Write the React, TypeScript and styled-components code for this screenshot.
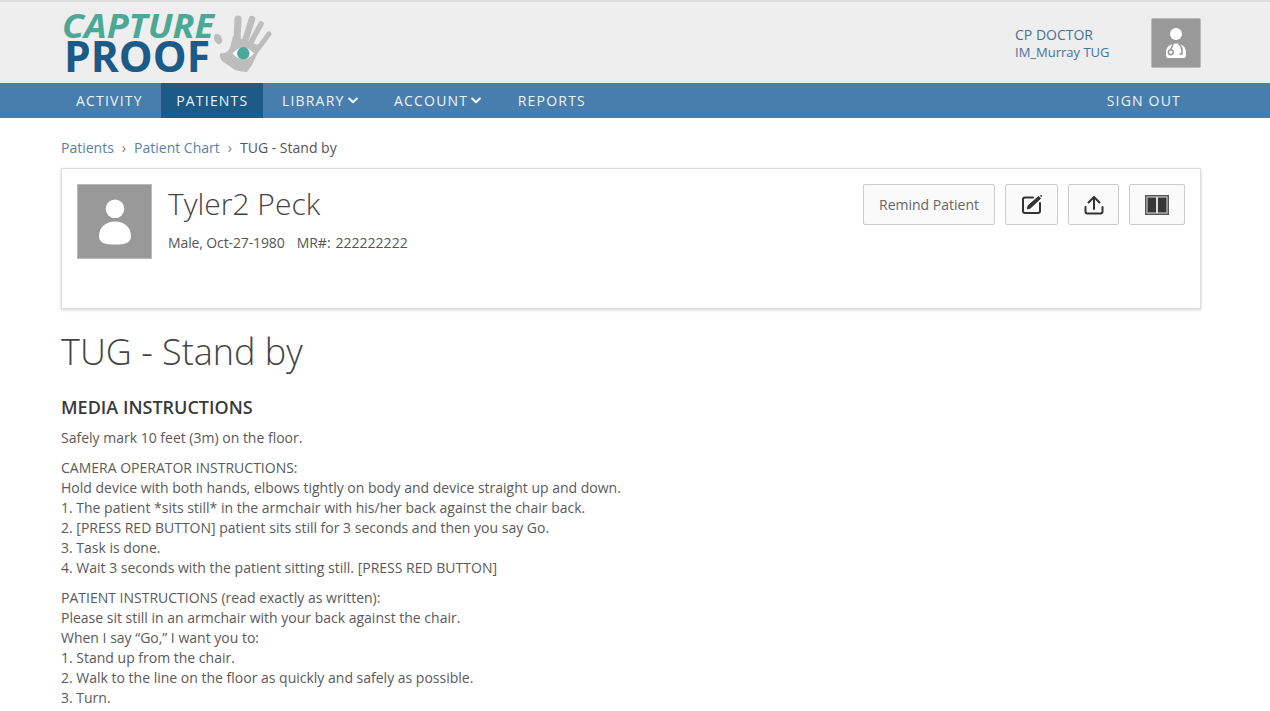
import React from "react";
import styled, { createGlobalStyle } from "styled-components";

const Global = createGlobalStyle`
  html, body { margin: 0; padding: 0; background: #fff; overflow: hidden; height: 711px; }
  body { font-family: "Open Sans", "Liberation Sans", sans-serif; color: #444; font-size: 14px; }
`;

const Header = styled.header`
  box-sizing: border-box;
  height: 83px;
  background: #eee;
  border-top: 2px solid #ddd;
  padding: 11px 69px 0 61px;
  display: flex;
  justify-content: space-between;
  align-items: flex-start;
`;
const Logo = styled.svg`
  display: block;
  width: 212px;
  height: 62px;
  overflow: visible;
`;
const UserBox = styled.div`
  display: flex;
  align-items: flex-start;
  padding-top: 5px;
`;
const UserText = styled.div`
  width: 136px;
  color: #45729b;
  padding-top: 8px;
`;
const UserName = styled.div`
  font-size: 14px;
  line-height: 18px;
`;
const UserSub = styled.div`
  font-size: 13px;
  line-height: 17px;
`;
const UserAvatar = styled.div`
  box-sizing: border-box;
  width: 50px;
  height: 50px;
  background: #999;
  border: 1px solid #bbb;
  border-radius: 2px;
  display: flex;
  align-items: center;
  justify-content: center;
`;
const Nav = styled.nav`
  height: 35px;
  background: #487eae;
  padding: 0 74px 0 61px;
  display: flex;
  gap: 3.5px;
`;
const NavItem = styled.a<{ $active?: boolean; $right?: boolean }>`
  display: flex;
  align-items: center;
  height: 35px;
  padding: 0 15px;
  margin-left: ${(p) => (p.$right ? "auto" : "0")};
  background: ${(p) => (p.$active ? "#1c5a87" : "transparent")};
  color: #eef4f8;
  font-size: 14px;
  letter-spacing: 1.2px;
`;
const ChevronIcon = styled.svg`
  margin: 0 3px 0 3px;
`;
const Main = styled.main`
  width: 1140px;
  margin-left: 61px;
`;
const Crumbs = styled.div`
  box-sizing: border-box;
  display: flex;
  height: 50px;
  padding-top: 8px;
  align-items: center;
  font-size: 14px;
  color: #555;
`;
const CrumbLink = styled.a`
  color: #5b7fa8;
`;
const Sep = styled.span`
  color: #777;
  margin: 0 8px;
`;
const Card = styled.section`
  box-sizing: border-box;
  height: 141px;
  background: #fff;
  border: 1px solid #ddd;
  box-shadow: 0 1px 3px rgba(0, 0, 0, 0.18);
  padding: 15px;
  display: flex;
  align-items: flex-start;
`;
const PatientAvatar = styled.div`
  box-sizing: border-box;
  width: 75px;
  height: 75px;
  background: #999;
  border: 1px solid #bbb;
  display: flex;
  align-items: center;
  justify-content: center;
  margin-right: 16px;
`;
const PatientInfo = styled.div`
  flex: 1;
`;
const PatientName = styled.h2`
  margin: 0;
  font-size: 30px;
  font-weight: 300;
  line-height: 40px;
  color: #444;
`;
const PatientMeta = styled.div`
  display: flex;
  gap: 12px;
  margin-top: 9px;
  font-size: 14px;
  line-height: 20px;
  color: #555;
`;
const MetaBirth = styled.span`
  letter-spacing: -0.12px;
`;
const MetaValue = styled.span`
  margin-left: 5px;
`;
const Actions = styled.div`
  display: flex;
  gap: 10px;
`;
const Button = styled.button<{ $w: number }>`
  box-sizing: border-box;
  width: ${(p) => p.$w}px;
  height: 41px;
  background: #fafafa;
  border: 1px solid #ccc;
  border-radius: 2px;
  font-family: inherit;
  font-size: 14px;
  color: #666;
  padding: 0;
  display: flex;
  align-items: center;
  justify-content: center;
`;
const Title = styled.h1`
  margin: 19px 0 0;
  font-size: 36px;
  font-weight: 300;
  line-height: 48px;
  color: #444;
`;
const Section = styled.h3`
  margin: 19px 0 -2px;
  font-size: 18px;
  font-weight: 600;
  line-height: 25px;
  color: #3a3a3a;
`;
const Para = styled.p`
  margin: 10px 0 0;
  font-size: 14px;
  font-weight: 400;
  line-height: 20px;
  color: #5a5a5a;
`;

const Chevron = () => (
  <ChevronIcon width="10" height="7" viewBox="0 0 10 7" fill="none" stroke="#eef4f8" strokeWidth="2.2" strokeLinecap="round" strokeLinejoin="round">
    <path d="M1.2 1.5 5 5.2 8.8 1.5" />
  </ChevronIcon>
);

const LogoMark = () => (
  <Logo viewBox="0 0 212 62">
    <text x="1" y="25" fontFamily="'Open Sans'" fontWeight="700" fontStyle="italic" fontSize="34" fill="#4ba896" textLength="152" lengthAdjust="spacingAndGlyphs">CAPTURE</text>
    <text x="3" y="59" fontFamily="'Open Sans'" fontWeight="700" fontSize="43" fill="#1c5a87" textLength="146" lengthAdjust="spacingAndGlyphs">PROOF</text>
    <g fill="none" stroke="#bdbdbd" strokeLinecap="round">
      <path d="M177 6 L176 28" strokeWidth="7" />
      <path d="M191 6 L184 28" strokeWidth="6.5" />
      <path d="M200 11 L189 31" strokeWidth="5.5" />
      <path d="M208 21 L196 37" strokeWidth="5" />
    </g>
    <ellipse cx="157" cy="26" rx="3.8" ry="5.5" fill="#bdbdbd" transform="rotate(-25 157 26)" />
    <path d="M172 23 L200 33 L191 52 L186 59 Q180 59 174 57 L161 48 Q157 42 160 40 Q166 41 169 35 Z" fill="#bdbdbd" />
    <path d="M171.5 40.5 Q182 28.5 193 40.5 Q182 52 171.5 40.5 Z" fill="#fff" />
    <circle cx="182.3" cy="40.3" r="6.2" fill="#4ba896" />
  </Logo>
);

const DoctorIcon = () => (
  <svg width="20" height="30" viewBox="0 0 20 30">
    <circle cx="10" cy="6" r="6" fill="#fff" />
    <path d="M0 24.5 C0 19 4 15.5 10 15.5 C16 15.5 20 19 20 24.5 V27 Q20 30 17.5 30 H2.5 Q0 30 0 27 Z" fill="#fff" />
    <g fill="none" stroke="#999" strokeWidth="1.6" strokeLinecap="round">
      <path d="M7 16 L4.8 21.5" />
      <circle cx="4.8" cy="24.2" r="2.4" />
      <path d="M13 16 Q16 18.5 16 22.5 V26 H14" />
    </g>
  </svg>
);

const PersonIcon = () => (
  <svg width="34" height="46" viewBox="0 0 34 46" fill="#fff">
    <circle cx="17" cy="9.8" r="9.3" />
    <path d="M1 37 C1 28 8 22.5 17 22.5 C26 22.5 33 28 33 37 C33 44 27 45.5 17 45.5 C7 45.5 1 44 1 37 Z" />
  </svg>
);

const EditIcon = () => (
  <svg width="22" height="22" viewBox="0 0 22 22" fill="none" stroke="#333" strokeWidth="2" strokeLinecap="round" strokeLinejoin="round">
    <path d="M12 3.5 H4 Q2 3.5 2 5.5 V17 Q2 19 4 19 H17 Q19 19 19 17 V9" />
    <path d="M6.5 14.5 L7.2 11.6 L17.6 2.4 L19.6 4.4 L9.4 14 Z" fill="#333" strokeWidth="1" />
    <circle cx="20.2" cy="1.9" r="0.9" fill="#333" stroke="none" />
  </svg>
);

const UploadIcon = () => (
  <svg width="20" height="20" viewBox="0 0 20 20" fill="none" stroke="#333" strokeWidth="2" strokeLinecap="round" strokeLinejoin="round">
    <path d="M10 14 V2 M4.5 7.5 10 2 15.5 7.5" />
    <path d="M1.5 12 V16.5 Q1.5 18.5 3.5 18.5 H16.5 Q18.5 18.5 18.5 16.5 V12" />
  </svg>
);

const ColumnsIcon = () => (
  <svg width="24" height="20" viewBox="0 0 24 20">
    <rect x="0.75" y="0.75" width="22.5" height="18.5" fill="#ddd" stroke="#555" strokeWidth="1.5" />
    <rect x="2.5" y="2.5" width="8.5" height="15" fill="#363636" />
    <rect x="13" y="2.5" width="8.5" height="15" fill="#363636" />
  </svg>
);

export default function App() {
  return (
    <>
      <Global />
      <Header>
        <LogoMark />
        <UserBox>
          <UserText>
            <UserName>CP DOCTOR</UserName>
            <UserSub>IM_Murray TUG</UserSub>
          </UserText>
          <UserAvatar>
            <DoctorIcon />
          </UserAvatar>
        </UserBox>
      </Header>
      <Nav>
        <NavItem>ACTIVITY</NavItem>
        <NavItem $active>PATIENTS</NavItem>
        <NavItem>LIBRARY<Chevron /></NavItem>
        <NavItem>ACCOUNT<Chevron /></NavItem>
        <NavItem>REPORTS</NavItem>
        <NavItem $right>SIGN OUT</NavItem>
      </Nav>
      <Main>
        <Crumbs>
          <CrumbLink>Patients</CrumbLink>
          <Sep>›</Sep>
          <CrumbLink>Patient Chart</CrumbLink>
          <Sep>›</Sep>
          <span>TUG - Stand by</span>
        </Crumbs>
        <Card>
          <PatientAvatar>
            <PersonIcon />
          </PatientAvatar>
          <PatientInfo>
            <PatientName>Tyler2 Peck</PatientName>
            <PatientMeta>
              <MetaBirth>Male, Oct-27-1980</MetaBirth>
              <span>MR#:<MetaValue>222222222</MetaValue></span>
            </PatientMeta>
          </PatientInfo>
          <Actions>
            <Button $w={132}>Remind Patient</Button>
            <Button $w={53}><EditIcon /></Button>
            <Button $w={51}><UploadIcon /></Button>
            <Button $w={56}><ColumnsIcon /></Button>
          </Actions>
        </Card>
        <Title>TUG - Stand by</Title>
        <Section>MEDIA INSTRUCTIONS</Section>
        <Para>Safely mark 10 feet (3m) on the floor.</Para>
        <Para>
          CAMERA OPERATOR INSTRUCTIONS:<br />
          Hold device with both hands, elbows tightly on body and device straight up and down.<br />
          1. The patient *sits still* in the armchair with his/her back against the chair back.<br />
          2. [PRESS RED BUTTON] patient sits still for 3 seconds and then you say Go.<br />
          3. Task is done.<br />
          4. Wait 3 seconds with the patient sitting still. [PRESS RED BUTTON]
        </Para>
        <Para>
          PATIENT INSTRUCTIONS (read exactly as written):<br />
          Please sit still in an armchair with your back against the chair.<br />
          When I say “Go,” I want you to:<br />
          1. Stand up from the chair.<br />
          2. Walk to the line on the floor as quickly and safely as possible.<br />
          3. Turn.
        </Para>
      </Main>
    </>
  );
}
